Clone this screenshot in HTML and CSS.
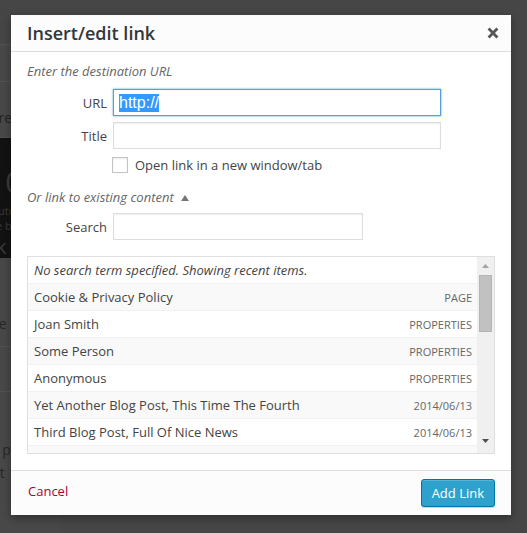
FILE: index.html
```html
<!DOCTYPE html>
<html lang="en">
<head>
<meta charset="utf-8">
<title>Insert/edit link</title>
<link rel="stylesheet" href="styles.css">
</head>
<body>
<div class="backdrop">
  <div class="bd-row bd-top"></div>
  <div class="bd-row bd-a"></div>
  <div class="bd-row bd-b"><span class="bd-text">Feature</span></div>
  <div class="bd-hero">
    <span class="bd-big">10</span>
    <span class="bd-small">tutu</span>
    <span class="bd-small">e be</span>
    <span class="bd-mid">k l</span>
  </div>
  <div class="bd-row bd-c"><span class="bd-text">Free</span></div>
  <div class="bd-row bd-d"></div>
  <div class="bd-row bd-e">
    <span class="bd-text">old p</span>
    <span class="bd-text bd-text-2">at</span>
  </div>
</div>

<div class="modal" role="dialog" aria-labelledby="modal-title">
  <div class="modal-header">
    <h1 class="modal-title" id="modal-title">Insert/edit link</h1>
    <button class="close-btn" type="button" aria-label="Close">
      <svg width="12" height="12" viewBox="0 0 12 12" aria-hidden="true">
        <path d="M1.6 1.6 L10.4 10.4 M10.4 1.6 L1.6 10.4" stroke="#555" stroke-width="2.8" fill="none"/>
      </svg>
    </button>
  </div>

  <div class="modal-body">
    <p class="howto howto-first">Enter the destination URL</p>

    <div class="field field-url">
      <span class="field-label">URL</span>
      <div class="text-input is-focused"><span class="selected">http://</span></div>
    </div>

    <div class="field field-title">
      <span class="field-label">Title</span>
      <div class="text-input"></div>
    </div>

    <div class="field field-check">
      <span class="check-box"></span>
      <span class="check-label">Open link in a new window/tab</span>
    </div>

    <p class="howto howto-toggle">Or link to existing content
      <svg class="toggle-arrow" width="8" height="6" viewBox="0 0 8 6" aria-hidden="true"><polygon points="4,0 8,6 0,6" fill="#777"/></svg>
    </p>

    <div class="field field-search">
      <span class="field-label">Search</span>
      <div class="text-input search-input"></div>
    </div>

    <div class="results">
      <ul class="results-list">
        <li class="query-notice">No search term specified. Showing recent items.</li>
        <li class="item alt"><span class="item-title">Cookie &amp; Privacy Policy</span><span class="item-info">Page</span></li>
        <li class="item"><span class="item-title">Joan Smith</span><span class="item-info">Properties</span></li>
        <li class="item alt"><span class="item-title">Some Person</span><span class="item-info">Properties</span></li>
        <li class="item"><span class="item-title">Anonymous</span><span class="item-info">Properties</span></li>
        <li class="item alt"><span class="item-title">Yet Another Blog Post, This Time The Fourth</span><span class="item-info">2014/06/13</span></li>
        <li class="item"><span class="item-title">Third Blog Post, Full Of Nice News</span><span class="item-info">2014/06/13</span></li>
        <li class="item alt"><span class="item-title">Second Blog Post</span><span class="item-info">2014/06/13</span></li>
      </ul>
      <div class="scrollbar" aria-hidden="true">
        <div class="sb-btn">
          <svg width="7" height="4" viewBox="0 0 7 4"><polygon points="3.5,0 7,4 0,4" fill="#a3a3a3"/></svg>
        </div>
        <div class="sb-thumb"></div>
        <div class="sb-space"></div>
        <div class="sb-btn sb-btn-down">
          <svg width="7" height="4" viewBox="0 0 7 4"><polygon points="0,0 7,0 3.5,4" fill="#505050"/></svg>
        </div>
      </div>
    </div>
  </div>

  <div class="modal-footer">
    <a class="cancel-link" href="#">Cancel</a>
    <button class="primary-btn" type="button">Add Link</button>
  </div>
</div>
</body>
</html>
```

FILE: styles.css
```css
html, body {
  margin: 0;
  padding: 0;
}

body {
  width: 527px;
  height: 533px;
  overflow: hidden;
  position: relative;
  background: #464646;
  font-family: "Open Sans", "Liberation Sans", sans-serif;
}

/* ---------- dimmed page behind the modal ---------- */
.backdrop {
  display: flex;
  flex-direction: column;
  width: 60px;
  height: 533px;
  background: #484848;
  font-family: "Open Sans", sans-serif;
  color: #2a2a2a;
}

.bd-row {
  overflow: hidden;
  white-space: nowrap;
  border-bottom: 1px solid #515151;
  font-size: 14px;
  line-height: 19px;
}

.bd-top { height: 44px; background: #464646; }
.bd-a { height: 36px; }
.bd-b { height: 55px; }
.bd-text { display: block; color: #262626; }
.bd-b .bd-text { margin: 26px 0 0 -38px; color: #242424; }

.bd-hero {
  height: 120px;
  background: #121212;
  display: flex;
  flex-direction: column;
  overflow: hidden;
  white-space: nowrap;
}
.bd-big { font-size: 30px; line-height: 42px; margin: 23px 0 0 -12px; color: #3c3c3c; }
.bd-small { font-size: 11px; line-height: 15px; margin-left: -6px; color: #3a3a3a; }
.bd-small + .bd-small { margin-left: -4px; }
.bd-mid { font-size: 20px; line-height: 28px; margin: 0 0 0 -4px; color: #3c3c3c; }

.bd-c { height: 88px; }
.bd-c .bd-text { margin: 56px 0 0 -22px; }
.bd-d { height: 44px; }
.bd-e { flex: 1; border-bottom: none; }
.bd-e .bd-text { margin: 48px 0 0 -22px; }
.bd-e .bd-text-2 { margin: 4px 0 0 -8px; }

/* ---------- modal ---------- */
.modal {
  position: absolute;
  left: 11px;
  top: 15px;
  width: 500px;
  height: 500px;
  background: #fff;
  box-shadow: 0 3px 8px rgba(0, 0, 0, 0.35);
  display: flex;
  flex-direction: column;
}

.modal-header {
  height: 36px;
  flex: none;
  background: #fcfcfc;
  border-bottom: 1px solid #dddddd;
  display: flex;
  align-items: center;
  justify-content: space-between;
}

.modal-title {
  margin: 0;
  padding-left: 16px;
  font-size: 18px;
  font-weight: 600;
  line-height: 36px;
  color: #32373c;
}

.close-btn {
  width: 36px;
  height: 36px;
  padding: 0;
  border: none;
  background: transparent;
  display: flex;
  align-items: center;
  justify-content: center;
}

.modal-body {
  flex: 1;
  padding: 0 16px;
  display: flex;
  flex-direction: column;
}

.howto {
  margin: 0;
  font-size: 13px;
  line-height: 18px;
  font-style: italic;
  color: #666;
}

.howto-first { margin-top: 10px; }

.howto-toggle {
  margin-top: 14px;
  display: flex;
  align-items: center;
  gap: 7px;
}

.toggle-arrow { margin-top: 1px; }

.field {
  display: flex;
  align-items: center;
}

.field-label {
  width: 86px;
  box-sizing: border-box;
  padding-right: 6px;
  text-align: right;
  font-size: 13px;
  line-height: 18px;
  color: #444;
}

.field-url { margin-top: 9px; }
.field-title { margin-top: 6px; }
.field-search { margin-top: 7px; }

.text-input {
  box-sizing: border-box;
  width: 328px;
  height: 27px;
  border: 1px solid #dddddd;
  box-shadow: inset 0 1px 2px rgba(0, 0, 0, 0.07);
  background: #fff;
  padding: 0 5px;
  display: flex;
  align-items: center;
}

.search-input { width: 250px; }

.text-input.is-focused {
  border-color: #5b9dd9;
  box-shadow: 0 0 2px rgba(30, 140, 190, 0.8);
}

.selected {
  font-family: "Liberation Sans", Arial, sans-serif;
  font-size: 16px;
  line-height: 18px;
  background: #3399ff;
  color: #fff;
}

.field-check {
  margin-top: 7px;
  height: 18px;
  padding-left: 85px;
  gap: 7px;
}

.check-box {
  box-sizing: border-box;
  width: 16px;
  height: 16px;
  border: 1px solid #c4c4c4;
  background: #fff;
  box-shadow: inset 0 1px 2px rgba(0, 0, 0, 0.08);
}

.check-label {
  font-size: 13px;
  line-height: 18px;
  color: #444;
}

/* ---------- results ---------- */
.results {
  margin-top: 16px;
  height: 198px;
  box-sizing: border-box;
  border: 1px solid #dfdfdf;
  background: #fff;
  display: flex;
}

.results-list {
  flex: 1;
  margin: 0;
  padding: 0;
  list-style: none;
  overflow: hidden;
}

.query-notice,
.item {
  box-sizing: border-box;
  height: 27px;
  padding: 4px 5px 4px 6px;
  font-size: 13px;
  line-height: 18px;
  color: #444;
  border-bottom: 1px solid #f1f1f1;
  white-space: nowrap;
  overflow: hidden;
}

.query-notice {
  font-style: italic;
  color: #444;
}

.item {
  display: flex;
  justify-content: space-between;
  align-items: center;
}

.item.alt { background: #f9f9f9; }

.item-title { line-height: 18px; }

.item-info {
  font-size: 11px;
  line-height: 18px;
  padding-top: 1px;
  text-transform: uppercase;
  color: #666;
}

.scrollbar {
  width: 17px;
  flex: none;
  background: #f0f0f0;
  display: flex;
  flex-direction: column;
}

.sb-btn {
  height: 17px;
  display: flex;
  align-items: center;
  justify-content: center;
}

.sb-btn-down { height: 14px; align-items: flex-start; }

.sb-thumb {
  margin: 1px 2px 0 2px;
  height: 57px;
  box-sizing: border-box;
  background: #c1c1c1;
  border: 1px solid #b5b5b5;
}

.sb-space { flex: 1; }

/* ---------- footer ---------- */
.modal-footer {
  height: 44px;
  flex: none;
  border-top: 1px solid #dddddd;
  background: #fcfcfc;
  padding: 0 16px;
  display: flex;
  align-items: center;
  justify-content: space-between;
}

.cancel-link {
  margin: 0 0 4px 1px;
  font-size: 13px;
  line-height: 18px;
  color: #aa0033;
  text-decoration: none;
}

.primary-btn {
  height: 28px;
  box-sizing: border-box;
  padding: 0 10px 1px;
  font-family: "Open Sans", sans-serif;
  font-size: 13px;
  line-height: 26px;
  color: #fff;
  background: #2ea2cc;
  border: 1px solid #0074a2;
  border-radius: 3px;
  box-shadow: inset 0 1px 0 rgba(120, 200, 230, 0.5), 0 1px 0 rgba(0, 0, 0, 0.15);
}
```
